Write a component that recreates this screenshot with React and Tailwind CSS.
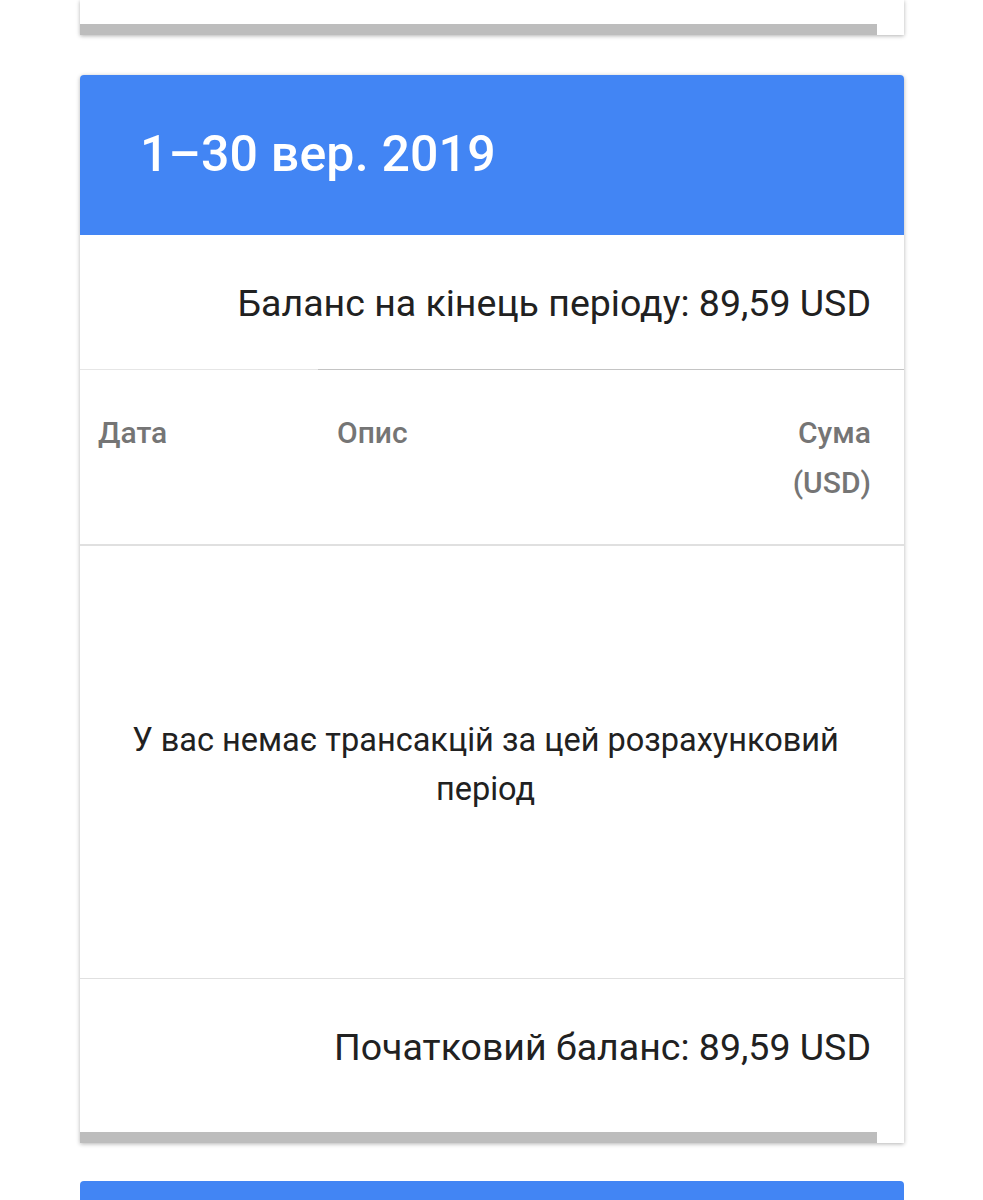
import React from 'react';

// ── Statement period card ─────────────────────────────
const ScrollBar = () => (
  <div className="flex h-[11px]">
    <div className="flex-1 bg-[#bdbdbd]" />
    <div className="w-[27px] bg-white" />
  </div>
);

const PeriodCard = ({ title, closing, opening }) => (
  <div className="bg-white rounded-t-[4px] shadow-[0_1px_4px_rgba(0,0,0,0.3)]">
    <div className="h-[160px] bg-[#4285f4] rounded-t-[4px] flex items-center pl-[60px] pb-[2px]">
      <h2 className="text-white text-[50px] font-medium tracking-[0.2px]">{title}</h2>
    </div>

    <div className="h-[134px] flex items-center justify-end pr-[33px] pt-[2px] text-[37.5px] text-[#212121]">
      Баланс на кінець періоду: {closing}
    </div>

    {/* table head */}
    <div className="flex h-px">
      <div className="w-[238px] bg-[#e6e6e6]" />
      <div className="flex-1 bg-[#c4c4c4]" />
    </div>
    <div className="flex pt-[38px] pb-[36px] text-[30px] leading-[50px] font-medium text-[#757575] border-b-2 border-[#e0e0e0]">
      <div className="w-[238px] pl-[18px]">Дата</div>
      <div className="flex-1 pl-[19px]">Опис</div>
      <div className="pr-[33px] text-right">
        <div>Сума</div>
        <div>(USD)</div>
      </div>
    </div>

    <div className="h-[433px] flex items-center justify-center pl-[34px] pr-[47px] pt-[6px] text-center text-[32.5px] leading-[49px] text-[#212121] border-b border-[#e0e0e0]">
      У вас немає трансакцій за цей розрахунковий період
    </div>

    <div className="h-[153px] flex items-center justify-end pr-[33px] pb-[16px] text-[37.5px] text-[#212121]">
      Початковий баланс: {opening}
    </div>
    <ScrollBar />
  </div>
);

export default function App() {
  return (
    <div className="min-h-[1200px] h-[1200px] overflow-hidden bg-white font-['Roboto','Noto_Sans',sans-serif]">
      <div className="w-[824px] ml-[80px] flex flex-col">
        {/* previous card, mostly scrolled off */}
        <div className="bg-white shadow-[0_1px_4px_rgba(0,0,0,0.3)]">
          <div className="h-[24px]" />
          <ScrollBar />
        </div>

        <div className="mt-[40px]">
          <PeriodCard title="1–30 вер. 2019" closing="89,59 USD" opening="89,59 USD" />
        </div>

        <div className="mt-[38px] h-[60px] bg-[#4285f4] rounded-t-[4px]" />
      </div>
    </div>
  );
}
